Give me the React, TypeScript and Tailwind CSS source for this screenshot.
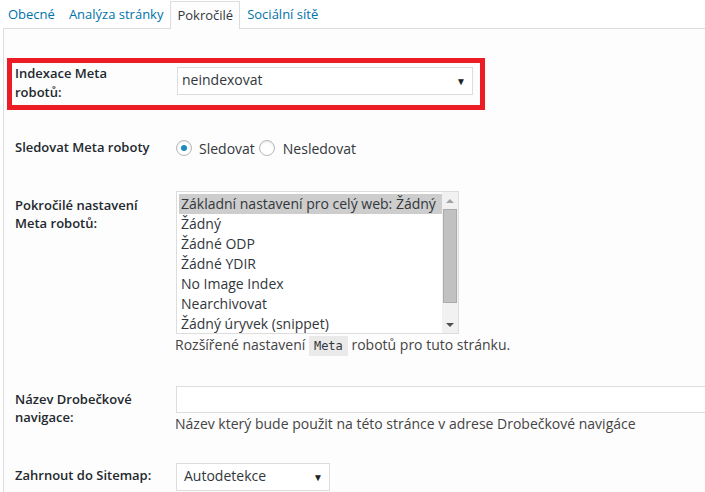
import React from "react";

const font = { fontFamily: "'Open Sans', 'Noto Sans', sans-serif" };

function Arrow() {
  return <span className="text-[10px] text-[#222] leading-none">▼</span>;
}

function Radio({ checked }: { checked?: boolean }) {
  return (
    <span className="w-[16px] h-[16px] rounded-full border border-[#b4b9be] bg-white flex items-center justify-center shadow-[inset_0_1px_2px_rgba(0,0,0,0.1)] shrink-0">
      {checked && <span className="w-[6px] h-[6px] rounded-full bg-[#1e8cbe]" />}
    </span>
  );
}

export default function App() {
  const options = [
    "Základní nastavení pro celý web: Žádný",
    "Žádný",
    "Žádné ODP",
    "Žádné YDIR",
    "No Image Index",
    "Nearchivovat",
    "Žádný úryvek (snippet)",
  ];
  return (
    <div className="w-[705px] h-[492px] bg-white overflow-hidden text-[#32373c]" style={font}>
      {/* tabs */}
      <div className="flex h-[28px] pl-[1px] text-[13px] leading-[28px]">
        <div className="px-[7px] text-[#0073aa]">Obecné</div>
        <div className="px-[7px] text-[#0073aa]">Analýza stránky</div>
        <div className="mt-[1px] px-[6px] h-[28px] leading-[26px] border border-b-0 border-[#dddddd] bg-[#fdfdfd] relative z-10 text-[#32373c]">
          Pokročilé
        </div>
        <div className="px-[7px] text-[#0073aa]">Sociální sítě</div>
      </div>
      {/* panel */}
      <div className="ml-[3px] border-l border-t border-[#dddddd] bg-[#fdfdfd] h-[470px] flex flex-col">
        {/* row 1 */}
        <div className="ml-[3px] mt-[29px] w-[478px] h-[52px] border-[5px] border-[#ed1c24] flex">
          <div className="w-[165px] pl-[3px] pt-[1px] text-[13px] leading-[19px] font-semibold text-[#23282d]">
            Indexace Meta
            <br />
            robotů:
          </div>
          <div className="mt-[4px] w-[296px] h-[28px] border border-[#dddddd] bg-white flex items-center justify-between pl-[4px] pr-[6px] text-[14px] leading-[20px]">
            <span className="-mt-[2px]">neindexovat</span>
            <Arrow />
          </div>
        </div>
        {/* row 2 */}
        <div className="mt-[26px] h-[24px] flex items-center">
          <div className="w-[172px] pl-[11px] text-[13px] font-semibold text-[#23282d]">Sledovat Meta roboty</div>
          <Radio checked />
          <span className="ml-[7px] mr-[4px] text-[14px]">Sledovat</span>
          <Radio />
          <span className="ml-[8px] text-[14px]">Nesledovat</span>
        </div>
        {/* row 3 */}
        <div className="mt-[31px] flex">
          <div className="w-[172px] pl-[11px] pt-[5px] text-[13px] leading-[18px] font-semibold text-[#23282d]">
            Pokročilé nastavení
            <br />
            Meta robotů:
          </div>
          <div className="flex flex-col">
            <div className="w-[283px] h-[143px] border border-[#dddddd] bg-white flex">
              <div className="flex-1 pl-[2px] pt-[2px] text-[14px] leading-[20px] overflow-hidden">
                {options.map((o, i) => (
                  <div
                    key={o}
                    className={
                      "pl-[2px] h-[20px] whitespace-nowrap " + (i === 0 ? "bg-[#cdcdcd]" : "")
                    }
                  >
                    {o}
                  </div>
                ))}
              </div>
              <div className="w-[16px] bg-[#f1f1f1] flex flex-col items-center">
                <div className="h-[17px] flex items-center justify-center">
                  <span className="w-0 h-0 border-l-[4px] border-r-[4px] border-b-[4px] border-l-transparent border-r-transparent border-b-[#a3a3a3]" />
                </div>
                <div className="w-[14px] h-[94px] bg-[#c1c1c1] border border-[#ababab]" />
                <div className="flex-1" />
                <div className="h-[17px] flex items-center justify-center">
                  <span className="w-0 h-0 border-l-[4px] border-r-[4px] border-t-[4px] border-l-transparent border-r-transparent border-t-[#505050]" />
                </div>
              </div>
            </div>
            <div className="mt-[1px] -ml-[1px] text-[14px] leading-[20px] text-[#444] whitespace-nowrap">
              Rozšířené nastavení{" "}
              <code
                className="bg-[#eaeaea] px-[5px] py-[3px] text-[12px] text-[#32373c]"
                style={{ fontFamily: "'DejaVu Sans Mono', 'Liberation Mono', monospace" }}
              >
                Meta
              </code>{" "}
              robotů pro tuto stránku.
            </div>
          </div>
        </div>
        {/* row 4 */}
        <div className="mt-[30px] flex">
          <div className="w-[172px] shrink-0 pl-[11px] pt-[4px] text-[13px] leading-[18px] font-semibold text-[#23282d]">
            Název Drobečkové
            <br />
            navigace:
          </div>
          <div className="flex flex-col flex-1">
            <div className="h-[27px] w-[560px] border border-[#dddddd] bg-white" />
            <div className="mt-[1px] -ml-[1px] text-[14px] leading-[20px] text-[#444] whitespace-nowrap">
              Název který bude použit na této stránce v adrese Drobečkové navigáce
            </div>
          </div>
        </div>
        {/* row 5 */}
        <div className="mt-[29px] flex items-center">
          <div className="w-[172px] pl-[11px] text-[13px] font-semibold text-[#23282d] -mt-[2px]">Zahrnout do Sitemap:</div>
          <div className="w-[154px] h-[28px] border border-[#dddddd] bg-white flex items-center justify-between pl-[7px] pr-[6px] text-[14px] leading-[20px]">
            <span className="-mt-[2px]">Autodetekce</span>
            <Arrow />
          </div>
        </div>
      </div>
    </div>
  );
}
